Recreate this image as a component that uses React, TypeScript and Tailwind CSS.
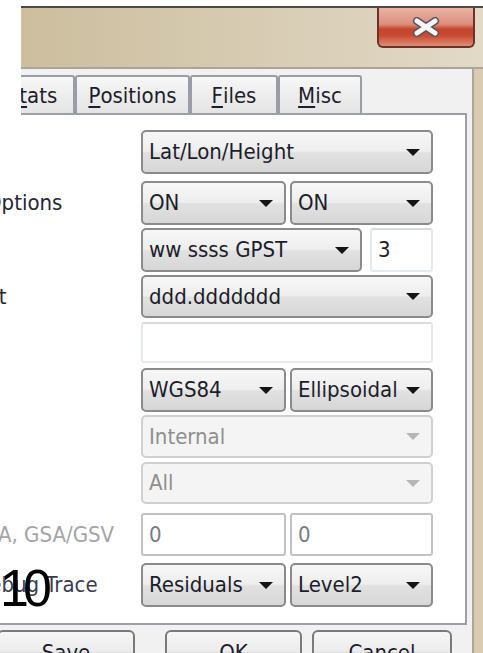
import type { ReactNode } from 'react'

// Tahoma-like face for all dialog text
const ui = "font-['DejaVu_Sans_Condensed','Liberation_Sans',sans-serif] text-[22px] leading-none"

function DropArrow({ muted }: { muted?: boolean }) {
  return (
    <span
      className={`h-0 w-0 shrink-0 border-x-[7px] border-t-[7px] border-x-transparent ${
        muted ? 'border-t-[#b6b6b6]' : 'border-t-[#141414]'
      }`}
    />
  )
}

function Combo({ value, width, muted }: { value: string; width: string; muted?: boolean }) {
  return (
    <div
      className={`${width} flex h-full items-center justify-between rounded-[5px] border-2 pl-[6px] pr-[11px] ${
        muted
          ? 'border-[#d0d0d0] bg-[#f4f4f4] text-[#8f8f8f]'
          : 'border-[#8b8b8b] bg-[linear-gradient(to_bottom,#f7f7f7_0%,#eeeeee_48%,#e1e1e1_52%,#d7d7d7_100%)] text-[#1d1d2b]'
      }`}
    >
      <span className="whitespace-nowrap">{value}</span>
      <DropArrow muted={muted} />
    </div>
  )
}

function Edit({ value, width, muted }: { value: string; width: string; muted?: boolean }) {
  return (
    <div
      className={`${width} flex h-full items-center rounded-[3px] border-2 bg-white pl-[6px] ${
        muted ? 'border-[#c2c2c2] text-[#7b7b86]' : 'border-[#e6e9ee] border-t-[#d6dae1] text-[#1d1d2b]'
      }`}
    >
      {value}
    </div>
  )
}

function Row({ top, height, label, children }: { top: string; height: string; label?: ReactNode; children: ReactNode }) {
  return (
    <div className={`${top} ${height} flex items-center`}>
      <div className="w-[141px] shrink-0 whitespace-nowrap">{label}</div>
      <div className="flex h-full w-[292px] justify-between">{children}</div>
    </div>
  )
}

function CloseButton() {
  return (
    <div className="flex h-[40px] w-[98px] items-center justify-center rounded-b-[6px] border-2 border-t-0 border-[#6b3327] bg-[linear-gradient(to_bottom,#eab3a4_0%,#dc907d_42%,#c5442c_56%,#c84a31_72%,#df8d75_100%)]">
      <svg width="28" height="20" viewBox="0 0 28 20">
        <path d="M5 4 L23 16 M23 4 L5 16" stroke="#55555d" strokeWidth="8" strokeLinecap="round" />
        <path d="M5 4 L23 16 M23 4 L5 16" stroke="#f4f4f6" strokeWidth="5" strokeLinecap="round" />
      </svg>
    </div>
  )
}

function Tab({ width, children, first }: { width: string; children: ReactNode; first?: boolean }) {
  return (
    <div
      className={`${width} ${first ? '-ml-[32px]' : ''} flex h-[38px] shrink-0 items-center justify-center rounded-t-[3px] border-x-2 border-t-2 border-[#9a9da5] bg-gradient-to-b from-[#f7f7f7] to-[#e4e4e4] pt-[2px] text-[#1d1d2b]`}
    >
      {children}
    </div>
  )
}

function Button({ className, children }: { className: string; children: ReactNode }) {
  return (
    <div
      className={`${className} flex h-[44px] shrink-0 items-start justify-center rounded-[6px] border-2 border-[#7a7a7a] bg-[linear-gradient(to_bottom,#f6f6f6_0%,#ececec_48%,#dddddd_52%,#d0d0d0_100%)] pt-[10px] text-[#1d1d2b]`}
    >
      {children}
    </div>
  )
}

export default function App() {
  return (
    <div className={`relative flex h-[653px] w-[483px] flex-col overflow-hidden bg-white ${ui}`}>
      {/* caption bar */}
      <div className="flex h-[69px] shrink-0 pt-[6px]">
        <div className="w-[21px] shrink-0" />
        <div className="flex flex-1 justify-end border-y-2 border-t-[#4b4a47] border-b-[#aba598] bg-gradient-to-r from-[#ccbe9e] to-[#e2d9c7] pr-[8px]">
          <CloseButton />
        </div>
      </div>

      <div className="flex flex-1">
        <div className="flex w-[474px] shrink-0 flex-col border-r-2 border-[#aaa69d] bg-[#f1f1f1]">
          {/* tabs */}
          <div className="flex h-[44px] shrink-0">
            <div className="w-[21px] shrink-0 bg-white" />
            <div className="flex flex-1 items-end overflow-hidden">
              <Tab width="w-[86px]" first>
                S<span className="underline underline-offset-[3px]">t</span>ats
              </Tab>
              <Tab width="w-[115px]">
                <span className="underline underline-offset-[3px]">P</span>ositions
              </Tab>
              <Tab width="w-[88px]">
                <span className="underline underline-offset-[3px]">F</span>iles
              </Tab>
              <Tab width="w-[84px]">
                <span className="underline underline-offset-[3px]">M</span>isc
              </Tab>
            </div>
          </div>

          {/* page */}
          <div className="flex h-[512px] w-[467px] shrink-0 flex-col border-r-2 border-b-2 border-[#9c9fa6] bg-white">
            <div className="ml-[21px] h-[2px] shrink-0 bg-[#9c9fa6]" />
            <Row top="mt-[15px]" height="h-[44px]">
              <Combo value="Lat/Lon/Height" width="w-full" />
            </Row>
            <Row
              top="mt-[7px]"
              height="h-[44px]"
              label={<span className="-ml-[14px] text-[#262636]">Options</span>}
            >
              <Combo value="ON" width="w-[145px]" />
              <Combo value="ON" width="w-[143px]" />
            </Row>
            <Row top="mt-[3px]" height="h-[44px]">
              <Combo value="ww ssss GPST" width="w-[221px]" />
              <Edit value="3" width="w-[63px]" />
            </Row>
            <Row
              top="mt-[3px]"
              height="h-[43px]"
              label={<span className="-ml-[63px] text-[#262636]">Format</span>}
            >
              <Combo value="ddd.ddddddd" width="w-full" />
            </Row>
            <Row top="mt-[4px]" height="h-[41px]">
              <Edit value="" width="w-full" />
            </Row>
            <Row top="mt-[5px]" height="h-[44px]">
              <Combo value="WGS84" width="w-[145px]" />
              <Combo value="Ellipsoidal" width="w-[143px]" />
            </Row>
            <Row top="mt-[3px]" height="h-[43px]">
              <Combo value="Internal" width="w-full" muted />
            </Row>
            <Row top="mt-[4px]" height="h-[42px]">
              <Combo value="All" width="w-full" muted />
            </Row>
            <Row
              top="mt-[9px]"
              height="h-[43px]"
              label={<span className="-ml-[84px] text-[#a4a4a8]">RMC/GGA, GSA/GSV</span>}
            >
              <Edit value="0" width="w-[145px]" muted />
              <Edit value="0" width="w-[143px]" muted />
            </Row>
            <Row
              top="mt-[7px]"
              height="h-[44px]"
              label={<span className="-ml-[26px] text-[#3a3d4e]">Debug Trace</span>}
            >
              <Combo value="Residuals" width="w-[145px]" />
              <Combo value="Level2" width="w-[143px]" />
            </Row>
          </div>

          {/* dialog buttons */}
          <div className="mt-[5px] flex">
            <Button className="-ml-[3px] w-[138px]">Save</Button>
            <Button className="ml-[30px] w-[137px]">OK</Button>
            <Button className="ml-[10px] w-[140px]">Cancel</Button>
          </div>
        </div>
        <div className="flex-1 bg-[#d9ccb3]" />
      </div>

      {/* page number stamped over the dialog */}
      <div className="absolute left-0 top-[562px] font-['Liberation_Sans',Arial,sans-serif] text-[52px] leading-none tracking-[-6px] text-black">
        10
      </div>
    </div>
  )
}
